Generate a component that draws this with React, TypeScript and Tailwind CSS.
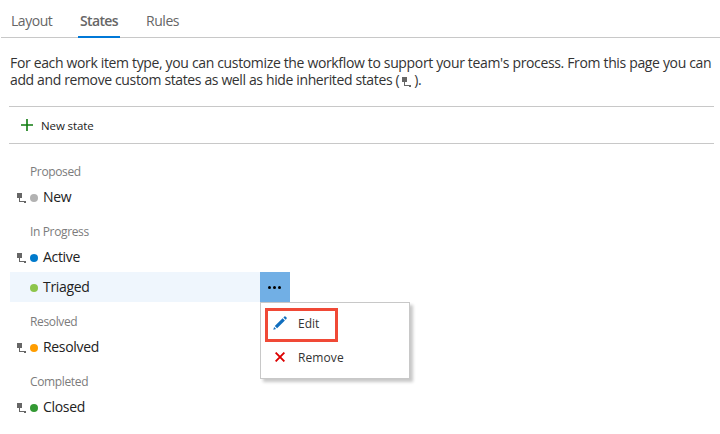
import React from "react";

function InheritedIcon({ className = "" }: { className?: string }) {
  return (
    <svg width="9" height="10" viewBox="0 0 9 10" shapeRendering="crispEdges" className={`shrink-0 ${className}`}>
      <path fill="#666" d="M0 0h5v5H0zM2 5h1v4H2zM2 8h6v1H2zM7 8h2v2H7z" />
    </svg>
  );
}

function Category({ name }: { name: string }) {
  return (
    <div className="h-[30px] pl-[30px] pt-[10px] text-[12px] leading-[20px] tracking-[-0.36px] text-[#7c7c7c]">{name}</div>
  );
}

type StateProps = { name: string; dot: string; inherited?: boolean; children?: React.ReactNode };

function State({ name, dot, inherited = true, children }: StateProps) {
  return (
    <div className={`relative ml-[10px] flex h-[30px] w-[280px] items-center pl-[7px] ${inherited ? "" : "bg-[#eff6fd]"}`}>
      <span className="w-[13px] shrink-0">{inherited && <InheritedIcon className="mt-[2px]" />}</span>
      <span className={`mt-[2px] size-2 shrink-0 rounded-full ${dot}`} />
      <span className="ml-[5px] text-[14px] leading-[20px] tracking-[-0.32px] text-[#222]">{name}</span>
      {children}
    </div>
  );
}

function ContextMenu() {
  return (
    <div className="absolute left-[250px] top-[30px] h-[77px] w-[150px] border border-[#c8c8c8] bg-white text-[12px] text-[#333] shadow-[3px_3px_3px_rgba(0,0,0,0.22)]">
      <div className="flex h-[42px] items-center pl-[12px]">
        <svg width="14" height="14" viewBox="0 0 14 14" className="-mt-[3px]">
          <path fill="#106ebe" d="M1.8 10 9.6 2.2 11.9 4.5 4.1 12.3ZM10.4 1.4 11.4.4Q12.1 0 12.8.7L13.4 1.3Q14 2 13.6 2.7L12.6 3.7ZM1.1 10.9 3.1 12.9.3 13.7Z" />
        </svg>
        <span className="ml-[11px]">Edit</span>
      </div>
      <div className="flex h-[26px] items-center pl-[14px]">
        <svg width="10" height="10" viewBox="0 0 10 10" className="-mt-[3px]">
          <path stroke="#dc0000" strokeWidth="1.9" d="M.6.6 9.4 9.4M9.4.6.6 9.4" />
        </svg>
        <span className="ml-[13px] tracking-[0.1px]">Remove</span>
      </div>
      <div className="absolute left-[4px] top-[5px] h-[34px] w-[73px] border-3 border-[#f04936]" />
    </div>
  );
}

export default function App() {
  return (
    <main className="h-[434px] w-[720px] overflow-hidden bg-white font-['Open_Sans','Noto_Sans',sans-serif]">
      <nav className="ml-px flex h-[38px] border-b border-[#c8c8c8] text-[14px] leading-[20px] text-[#666]">
        <span className="w-[43px] ml-[10px] pt-[11px] tracking-[-0.45px]">Layout</span>
        <span className="ml-[24px] h-[38px] w-[42px] border-b-2 border-[#0078d7] pl-[2px] pt-[11px] font-semibold tracking-[-0.65px]">States</span>
        <span className="ml-[26px] pt-[11px] tracking-[-0.45px]">Rules</span>
      </nav>
      <div className="h-[68px] whitespace-nowrap pl-[10px] pt-[16px] text-[14px] leading-[17px] text-[#333]">
        <p className="tracking-[-0.345px]">For each work item type, you can customize the workflow to support your team's process. From this page you can</p>
        <p className="flex tracking-[-0.37px]">
          <span>add and remove custom states as well as hide inherited states (</span>
          <InheritedIcon className="ml-[3px] mt-[6px]" />
          <span className="ml-[3px]">).</span>
        </p>
      </div>
      <div className="ml-[9px] flex h-[38px] w-[705px] items-center border-y border-[#c8c8c8] text-[11.5px] text-[#222]">
        <svg width="12" height="12" viewBox="0 0 12 12" className="ml-[12px]">
          <path fill="#107c10" d="M5.2 0h1.6v12H5.2zM0 5.2h12v1.6H0z" />
        </svg>
        <span className="ml-[8px] mt-px tracking-[-0.1px]">New state</span>
      </div>
      <section className="pt-[8px]">
        <Category name="Proposed" />
        <State name="New" dot="bg-[#b2b2b2]" />
        <Category name="In Progress" />
        <State name="Active" dot="bg-[#007acc]" />
        <State name="Triaged" dot="bg-[#8dc54b]" inherited={false}>
          <button className="ml-auto flex h-[30px] w-[30px] items-center justify-center gap-[2px] bg-[#71afe5] pr-[1px]">
            <i className="size-[3px] rounded-full bg-black" />
            <i className="size-[3px] rounded-full bg-black" />
            <i className="size-[3px] rounded-full bg-black" />
          </button>
          <ContextMenu />
        </State>
        <Category name="Resolved" />
        <State name="Resolved" dot="bg-[#ff9d00]" />
        <Category name="Completed" />
        <State name="Closed" dot="bg-[#339933]" />
      </section>
    </main>
  );
}
